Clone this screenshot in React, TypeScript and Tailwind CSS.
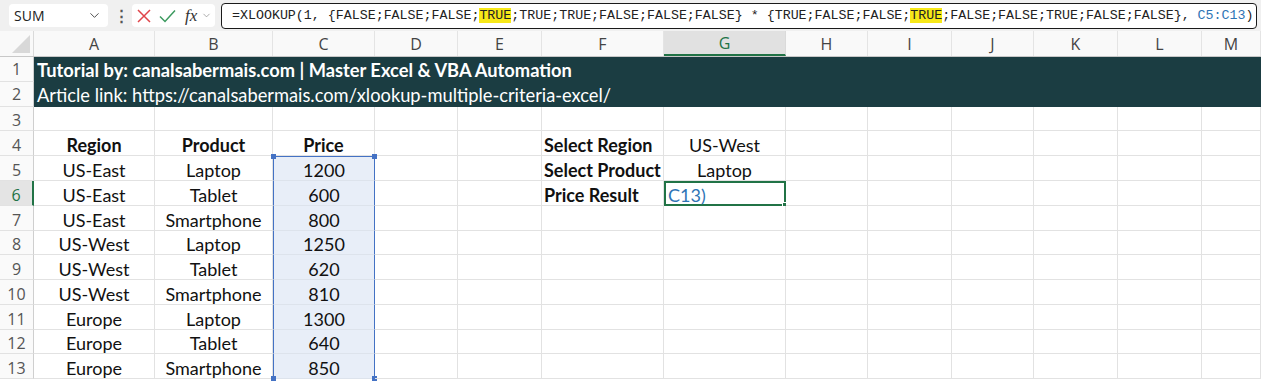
import React from "react";
import { ChevronDown } from "lucide-react";

const COLS = ["A", "B", "C", "D", "E", "F", "G", "H", "I", "J", "K", "L", "M"];
const GRID =
  "grid grid-cols-[34px_121px_118px_102px_83px_84px_122px_122px_82px_84px_82px_84px_84px_59px] grid-rows-[100%]";

type Cell = { v: string; bold?: boolean; align?: "left" | "center" };

const data: Record<number, Record<string, Cell>> = {
  4: {
    A: { v: "Region", bold: true },
    B: { v: "Product", bold: true },
    C: { v: "Price", bold: true },
    F: { v: "Select Region", bold: true, align: "left" },
    G: { v: "US-West" },
  },
  5: {
    A: { v: "US-East" },
    B: { v: "Laptop" },
    C: { v: "1200" },
    F: { v: "Select Product", bold: true, align: "left" },
    G: { v: "Laptop" },
  },
  6: {
    A: { v: "US-East" },
    B: { v: "Tablet" },
    C: { v: "600" },
    F: { v: "Price Result", bold: true, align: "left" },
  },
  7: { A: { v: "US-East" }, B: { v: "Smartphone" }, C: { v: "800" } },
  8: { A: { v: "US-West" }, B: { v: "Laptop" }, C: { v: "1250" } },
  9: { A: { v: "US-West" }, B: { v: "Tablet" }, C: { v: "620" } },
  10: { A: { v: "US-West" }, B: { v: "Smartphone" }, C: { v: "810" } },
  11: { A: { v: "Europe" }, B: { v: "Laptop" }, C: { v: "1300" } },
  12: { A: { v: "Europe" }, B: { v: "Tablet" }, C: { v: "640" } },
  13: { A: { v: "Europe" }, B: { v: "Smartphone" }, C: { v: "850" } },
};

const rowHeight: Record<number, string> = {
  1: "h-[25px]",
  2: "h-[25px]",
  3: "h-[24px]",
  4: "h-[25px]",
  5: "h-[25px]",
  6: "h-[25px]",
  7: "h-[25px]",
  8: "h-[24px]",
  9: "h-[25px]",
  10: "h-[25px]",
  11: "h-[25px]",
  12: "h-[24px]",
  13: "h-[25px]",
};

function Handle({ pos }: { pos: string }) {
  return <span className={`absolute w-[5px] h-[5px] bg-[#4472c4] ${pos}`} />;
}

function FormulaBar() {
  const hl = "bg-[#f7e818]";
  return (
    <div className="h-[31px] bg-[#f0f0f0] flex items-center pl-[9px] pr-[4px] gap-[6px]">
      <div className="w-[99px] h-[23px] bg-white rounded-[4px] flex items-center justify-between pl-[5px] pr-[6px] text-[14px] text-[#222] font-[family-name:'Open_Sans',sans-serif]">
        <span>SUM</span>
        <ChevronDown size={15} strokeWidth={1.5} className="text-[#444]" />
      </div>
      <span className="w-[12px] text-center text-[#555] text-[15px] leading-none font-bold">⋮</span>
      <div className="w-[83px] h-[23px] bg-white rounded-[4px] flex items-center pl-[5px]">
        <svg width="14" height="14" viewBox="0 0 14 14" className="shrink-0">
          <path d="M1 1 L13 13 M13 1 L1 13" stroke="#e0454a" strokeWidth="1.5" fill="none" />
        </svg>
        <svg width="17" height="14" viewBox="0 0 17 14" className="ml-[8px] shrink-0">
          <path d="M1 7.5 L6 12.5 L16 1.5" stroke="#3c9a5f" strokeWidth="1.5" fill="none" />
        </svg>
        <span className="ml-[9px] italic text-[17px] leading-none text-[#333] font-[family-name:'Liberation_Serif',serif]">fx</span>
        <ChevronDown size={11} strokeWidth={1.5} className="ml-[4px] text-[#888]" />
      </div>
      <div className="flex-1 h-[26px] border-[1.5px] border-[#1a1a1a] rounded-[4px] bg-white flex items-center pl-[10px] overflow-hidden whitespace-nowrap text-[13.3px] text-[#222] font-[family-name:'Liberation_Mono',monospace]">
        <span>
          =XLOOKUP(1, {"{"}FALSE;FALSE;FALSE;<span className={hl}>TRUE</span>;TRUE;TRUE;FALSE;FALSE;FALSE{"}"} * {"{"}TRUE;FALSE;FALSE;
          <span className={hl}>TRUE</span>;FALSE;FALSE;TRUE;FALSE;FALSE{"}"}, <span className="text-[#2e74b5]">C5:C13</span>)
        </span>
      </div>
    </div>
  );
}

function ColumnHeaders() {
  return (
    <div className={`${GRID} h-[26px] bg-[#f9f9f9] border-b border-[#c8c8c8] font-[family-name:'Open_Sans',sans-serif] text-[16px] leading-[20px] text-[#444]`}>
      <div className="relative border-r border-[#dadada]">
        <span className="absolute right-[3px] bottom-[3px] w-0 h-0 border-l-[18px] border-l-transparent border-b-[18px] border-b-[#d8d8d8]" />
      </div>
      {COLS.map((c) =>
        c === "G" ? (
          <div key={c} className="flex items-center justify-center bg-[#e1e1e1] text-[#217346] border-b-2 border-[#217346] border-r border-r-[#dadada]">
            {c}
          </div>
        ) : (
          <div key={c} className="flex items-center justify-center border-r border-[#e4e4e4]">
            {c}
          </div>
        )
      )}
    </div>
  );
}

function RowHeader({ n, pad }: { n: number; pad?: boolean }) {
  const active = n === 6;
  return (
    <div
      className={`flex items-center justify-center text-[16px] leading-[20px] font-[family-name:'Open_Sans',sans-serif] border-b border-[#e2e2e2] ${
        pad ? "pt-[3px]" : ""
      } ${
        active
          ? "bg-[#e4e4e4] text-[#217346] border-r-2 border-r-[#217346]"
          : "bg-[#fafafa] text-[#555] border-r border-r-[#cfcfcf]"
      }`}
    >
      {n}
    </div>
  );
}

function BandRow({ n, children, bold }: { n: number; children: React.ReactNode; bold?: boolean }) {
  return (
    <div className={`${GRID} ${rowHeight[n]}`}>
      <RowHeader n={n} />
      <div
        className={`col-span-13 bg-[#1b3d42] text-white text-[18.3px] leading-[22px] pl-[3px] flex items-center whitespace-nowrap ${
          bold ? "font-bold" : ""
        }`}
      >
        {children}
      </div>
    </div>
  );
}

function DataRow({ n }: { n: number }) {
  const row = data[n] || {};
  return (
    <div className={`${GRID} ${rowHeight[n]}`}>
      <RowHeader n={n} pad />
      {COLS.map((c) => {
        const cell = row[c];
        const inPrice = c === "C" && n >= 5 && n <= 13;
        const active = c === "G" && n === 6;
        if (active) {
          return (
            <div key={c} className="relative border-2 border-[#217346] flex items-center pl-[2px] pt-[2px] text-[18px] leading-[20px] text-[#2e74b5]">
              C13)
              <span className="absolute -right-[3px] -bottom-[3px] w-[5px] h-[5px] bg-[#217346] border border-white" />
            </div>
          );
        }
        let cls = "relative flex items-center pt-[3px] whitespace-nowrap text-[18px] leading-[20px] text-[#111] border-b border-r border-[#e2e2e2]";
        if (inPrice) {
          cls = "relative flex items-center pt-[3px] whitespace-nowrap text-[18px] leading-[20px] text-[#111] bg-[#e8eef8] border-x-[1.5px] border-x-[#4472c4] border-b border-b-[#dde3ec]";
          if (n === 5) cls += " border-t-[1.5px] border-t-[#4472c4]";
          if (n === 13) cls += " border-b-[1.5px] border-b-[#4472c4]";
        }
        const align = cell?.align === "left" ? "justify-start pl-[2px]" : "justify-center";
        return (
          <div key={c} className={`${cls} ${align} ${cell?.bold ? "font-bold" : ""}`}>
            {cell?.v}
            {inPrice && n === 5 && (
              <>
                <Handle pos="-left-[3px] -top-[3px]" />
                <Handle pos="-right-[3px] -top-[3px]" />
              </>
            )}
            {inPrice && n === 13 && (
              <>
                <Handle pos="-left-[3px] -bottom-[3px]" />
                <Handle pos="-right-[3px] -bottom-[3px]" />
              </>
            )}
          </div>
        );
      })}
    </div>
  );
}

export default function App() {
  const rows = [3, 4, 5, 6, 7, 8, 9, 10, 11, 12, 13];
  return (
    <div className="w-[1261px] h-[385px] overflow-hidden bg-white font-[family-name:Lato,sans-serif]">
      <FormulaBar />
      <ColumnHeaders />
      <BandRow n={1} bold>
        Tutorial by: canalsabermais.com | Master Excel &amp; VBA Automation
      </BandRow>
      <BandRow n={2}>Article link: https://canalsabermais.com/xlookup-multiple-criteria-excel/</BandRow>
      {rows.map((n) => (
        <DataRow key={n} n={n} />
      ))}
    </div>
  );
}
